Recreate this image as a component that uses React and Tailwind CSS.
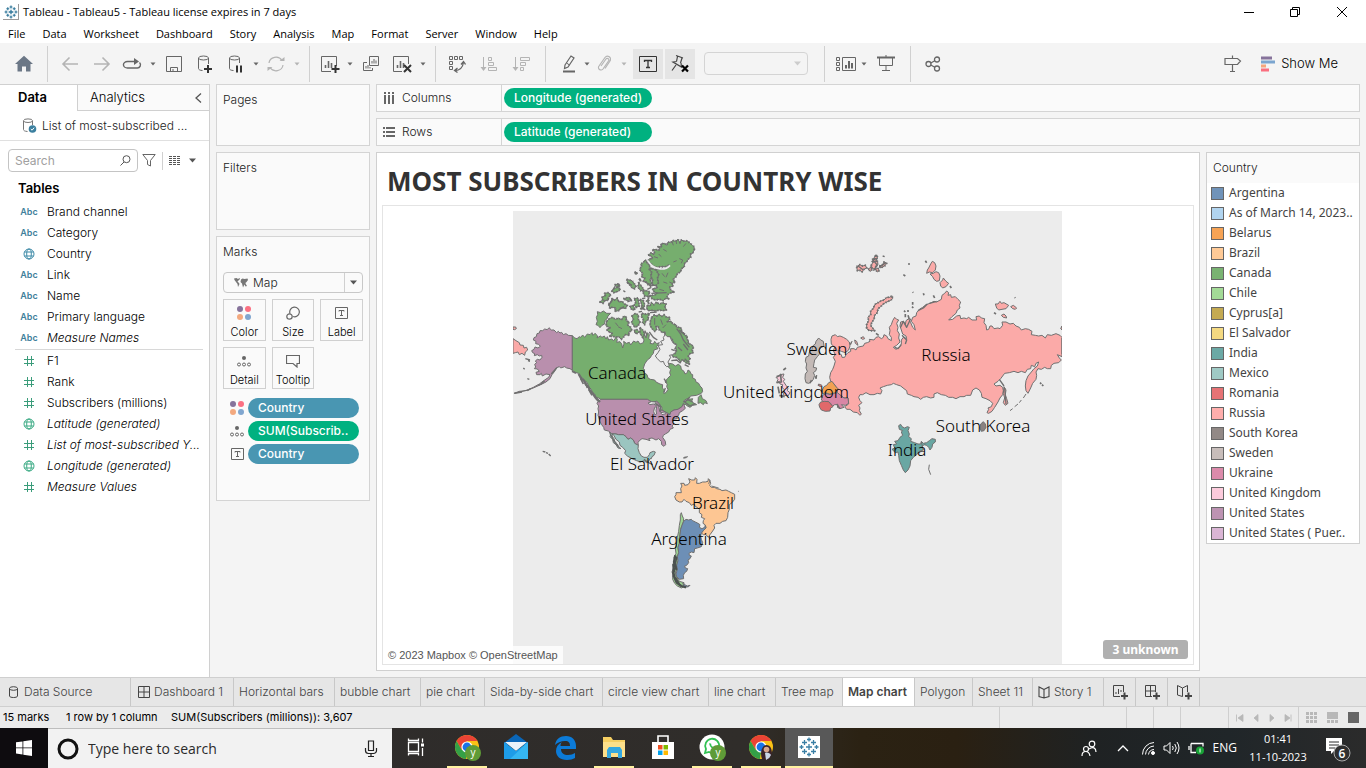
import React from "react";

const UI = "font-[Inter,'Liberation_Sans',sans-serif]";
const WIN = "font-['Open_Sans','Noto_Sans',sans-serif]";
const BOOK = "font-['Noto_Sans','Open_Sans',sans-serif]";

/* ---------- small helpers ---------- */

function Svg({ w = 20, h = 20, children, className = "", ...rest }) {
  return (
    <svg
      width={w}
      height={h}
      viewBox={`0 0 ${w} ${h}`}
      fill="none"
      stroke="currentColor"
      aria-hidden="true"
      className={`shrink-0 ${className}`}
      {...rest}
    >
      {children}
    </svg>
  );
}

function Tool({ label, w = "w-7", tone = "text-[#666]", active = false, children }) {
  return (
    <button
      type="button"
      aria-label={label}
      className={`${w} ${tone} ${active ? "bg-[#e5e5e5]" : ""} flex h-[30px] shrink-0 items-center justify-center`}
    >
      {children}
    </button>
  );
}

function Caret({ w = "w-3", tone = "text-[#666]" }) {
  return (
    <Tool label="More options" w={w} tone={tone}>
      <Svg w={6} h={4} stroke="none" fill="currentColor">
        <path d="M0.5 0.5h5L3 3.5z" />
      </Svg>
    </Tool>
  );
}

function Sep({ className = "" }) {
  return <span className={`h-9 w-px shrink-0 bg-[#d0d0d0] ${className}`} />;
}

function Bars() {
  return <path d="M5.5 14v-3M8.5 14V7M11.5 14V9" strokeWidth="1.6" />;
}

/* ---------- top bars ---------- */

function TableauMark({ size = 16 }) {
  return (
    <svg width={size} height={size} viewBox="0 0 24 24" stroke="#2f7699" fill="none" aria-hidden="true">
      <path d="M12 8v8M8 12h8" strokeWidth="2.2" />
      <path d="M12 1v5M9.5 3.5h5M12 18v5M9.5 20.5h5M1 12h5M3.5 9.5v5M18 12h5M20.5 9.5v5" strokeWidth="1.9" />
      <path d="M6.5 4v5M4 6.5h5M17.5 4v5M15 6.5h5M6.5 15v5M4 17.5h5M17.5 15v5M15 17.5h5" strokeWidth="1.9" />
    </svg>
  );
}

function TitleBar() {
  return (
    <header className={`flex h-6 items-center bg-white text-[11px] text-black ${WIN}`}>
      <span className="ml-[3px] flex h-4 w-4 items-center justify-center border-r border-b border-[#999]">
        <TableauMark size={14} />
      </span>
      <h1 className="ml-1 whitespace-nowrap">Tableau - Tableau5 - Tableau license expires in 7 days</h1>
      <div className="ml-auto flex text-black">
        <button type="button" aria-label="Minimize" className="flex h-6 w-[46px] items-center justify-center">
          <Svg w={10} h={10}><path d="M0 5.5h10" /></Svg>
        </button>
        <button type="button" aria-label="Restore" className="flex h-6 w-[46px] items-center justify-center">
          <Svg w={10} h={10}><path d="M0.5 2.5h7v7h-7zM2.5 2.5v-2h7v7h-2" /></Svg>
        </button>
        <button type="button" aria-label="Close" className="flex h-6 w-12 items-center justify-center">
          <Svg w={12} h={12}><path d="M1 1l10 10M11 1L1 11" /></Svg>
        </button>
      </div>
    </header>
  );
}

const MENUS = ["File", "Data", "Worksheet", "Dashboard", "Story", "Analysis", "Map", "Format", "Server", "Window", "Help"];

function MenuBar() {
  return (
    <nav className={`flex h-[19px] items-center gap-[17px] bg-white pl-2 text-[11px] text-black ${WIN}`}>
      {MENUS.map((m) => (
        <button key={m} type="button" className="leading-4">{m}</button>
      ))}
    </nav>
  );
}

function Toolbar() {
  const faint = "text-[#b4b4b4]";
  return (
    <div className="flex h-[41px] items-center">
      <Tool label="Home" w="w-[47px]">
        <svg width="18" height="18" viewBox="0 0 18 18" aria-hidden="true">
          <path d="M9 0.8L18 9h-2.5v7.5h-4.5v-5H7v5H2.5V9H0L9 0.8z" fill="#6b7786" />
        </svg>
      </Tool>
      <Sep className="mr-1.5" />
      <Tool label="Back" w="w-8" tone={faint}>
        <Svg w={18} h={16}><path d="M17 8H2M8.5 1.5L2 8l6.5 6.5" strokeWidth="1.6" /></Svg>
      </Tool>
      <Tool label="Forward" w="w-8" tone={faint}>
        <Svg w={18} h={16}><path d="M1 8h15M9.5 1.5L16 8l-6.5 6.5" strokeWidth="1.6" /></Svg>
      </Tool>
      <Tool label="Replay">
        <Svg w={20} h={12}>
          <path d="M14 3.5H5.5a4 3.2 0 0 0 0 6.5h9.5a3.2 3.2 0 0 0 2.5-5.5" strokeWidth="1.4" />
          <path d="M12 0l5 3.5-5 3.5z" fill="currentColor" stroke="none" />
        </Svg>
      </Tool>
      <Caret w="w-[14px]" />
      <Tool label="Save">
        <Svg w={18} h={18}><path d="M1.5 1.5h15v15h-15zM5.5 16.5v-4h7v4M8 16v-2" /></Svg>
      </Tool>
      <Tool label="New data source" w="w-[34px]">
        <Svg w={16} h={18}>
          <path d="M1.5 3v10.5c0 1 1.5 2 4 2M11.5 3v6" />
          <ellipse cx="6.5" cy="3" rx="5" ry="2" />
          <path d="M11 10v8M7 14h8" stroke="#333" strokeWidth="2" />
        </Svg>
      </Tool>
      <Tool label="Pause auto updates">
        <Svg w={16} h={18}>
          <path d="M1.5 3v10.5c0 1 1.5 2 4 2M11.5 3v5" />
          <ellipse cx="6.5" cy="3" rx="5" ry="2" />
          <path d="M9 10.5v7M13 10.5v7" stroke="#333" strokeWidth="2" />
        </Svg>
      </Tool>
      <Caret />
      <Tool label="Refresh" tone={faint}>
        <Svg w={18} h={16}>
          <path d="M2 7a7 6.5 0 0 1 13-2.500M16 9a7 6.5 0 0 1-13 2.500" strokeWidth="1.2" />
          <path d="M12.5 5h5V1zM5.5 11h-5v4z" fill="currentColor" stroke="none" />
        </Svg>
      </Tool>
      <Caret w="w-[14px]" tone={faint} />
      <Sep className="mr-1.5 ml-[5px]" />
      <Tool label="New worksheet">
        <Svg w={20} h={20}>
          <path d="M11 17.5H1.5v-15h15V12" />
          <Bars />
          <path d="M15.5 11v8M11.5 15h8" stroke="#333" strokeWidth="2" />
        </Svg>
      </Tool>
      <Caret />
      <Tool label="Duplicate" w="w-[30px]">
        <Svg w={18} h={18}>
          <path d="M7.5 1.5h9v9h-9zM5 7.500H1.5v8h9V13M10 8.500V6M12 8.500V4M14 8.500V5.500M4 13.500V11M6 13.500V10M8 13.500V12" />
        </Svg>
      </Tool>
      <Tool label="Clear sheet" w="w-8">
        <Svg w={20} h={20}>
          <path d="M10 17.5H1.5v-15h15V10" />
          <Bars />
          <path d="M12 11l7 7M19 11l-7 7" stroke="#333" strokeWidth="2" />
        </Svg>
      </Tool>
      <Caret w="w-[10px]" />
      <Sep className="mr-[5px] ml-[7px]" />
      <Tool label="Swap rows and columns" w="w-8">
        <Svg w={18} h={18}>
          <path d="M1.5 1.5h3v3h-3zM6.500 1.5h3v3h-3zM11.500 1.5h3v3h-3zM1.5 6.500h3v3h-3zM1.5 11.500h3v3h-3z" />
          <path d="M7 15.500c4 0 7.500-2 8.500-8M9.500 13l-3 2.500 3 2M13 9.500l2.500-3 2 3" strokeWidth="1.3" />
        </Svg>
      </Tool>
      <Tool label="Sort ascending" w="w-8" tone={faint}>
        <Svg w={18} h={16}>
          <path d="M3.5 1v12M8.5 1.500h3v3h-3zM8.5 6.500h5v3h-5zM8.500 11.500h8v3h-8z" />
          <path d="M0.500 11h6l-3 4z" fill="currentColor" stroke="none" />
        </Svg>
      </Tool>
      <Tool label="Sort descending" w="w-8" tone={faint}>
        <Svg w={18} h={16}>
          <path d="M3.500 1v12M8.500 1.500h9v3h-9zM8.500 6.500h5v3h-5zM8.500 11.500h3v3h-3z" />
          <path d="M0.500 11h6l-3 4z" fill="currentColor" stroke="none" />
        </Svg>
      </Tool>
      <Sep className="mr-[9px] ml-2" />
      <Tool label="Highlight">
        <Svg w={14} h={18}>
          <path d="M3 10L9 1l3 2-6 9-3.500 1.500z" strokeWidth="1.2" />
          <path d="M4.500 8l3 2" />
          <path d="M1 16.500h12" strokeWidth="2" />
        </Svg>
      </Tool>
      <Caret w="w-2" />
      <Tool label="Group members" w="w-[26px]" tone={faint}>
        <Svg w={14} h={18}>
          <path d="M4 11l5-7a1.500 1.500 0 0 1 2.500 2L6 14a2.500 2.500 0 0 1-4-3l6-8.500a3 3 0 0 1 5 3.500l-5 7.500" strokeWidth="1.2" />
        </Svg>
      </Tool>
      <Caret w="w-[14px]" tone={faint} />
      <Tool label="Show mark labels" w="ml-0.5 w-[30px]" active tone="text-[#333]">
        <Svg w={18} h={16}>
          <path d="M0.500 0.500h17v15h-17z" />
          <path d="M5.500 6V4.500h7V6M9 4.500v7M7 11.500h4" strokeWidth="1.3" />
        </Svg>
      </Tool>
      <Tool label="Fix axes" w="ml-0.5 w-[30px]" active tone="text-[#444]">
        <Svg w={20} h={20}>
          <path d="M6 1.500l7 2.500M7.500 2.500L6.500 7.500M12 4L10.500 9M6.500 7.500L3 8l8.500 5-0.500-4M6 11L2 16.500" strokeWidth="1.2" />
          <path d="M12 11.500l6 6M18 11.500l-6 6" stroke="#000" strokeWidth="2.2" />
        </Svg>
      </Tool>
      <button
        type="button"
        aria-label="Fit"
        className="ml-[9px] flex h-[23px] w-[104px] shrink-0 items-center justify-end rounded-sm border border-[#d4d4d4] pr-1.5 text-[#ccc]"
      >
        <Svg w={7} h={5} fill="currentColor" stroke="none"><path d="M0 0.500h7L3.500 4.500z" /></Svg>
      </button>
      <Sep className="mr-[7px] ml-4" />
      <Tool label="Show cards">
        <Svg w={20} h={16}>
          <path d="M0.500 1.500h3v3h-3zM0.500 6.500h3v3h-3zM0.500 11.500h3v3h-3zM6.500 1.500h13v13h-13z" />
          <path d="M10 12.500V9M13 12.500V5M16 12.500V7" strokeWidth="2" />
        </Svg>
      </Tool>
      <Caret w="w-2" />
      <Tool label="Presentation mode" w="w-9">
        <Svg w={18} h={18}>
          <path d="M0 2.500h18" strokeWidth="2" />
          <path d="M2.500 3v7.500h13V3M9 0v2M9 10.500V15" />
          <path d="M5 15.500h8" />
        </Svg>
      </Tool>
      <Sep className="mr-2 ml-1.5" />
      <Tool label="Share">
        <Svg w={16} h={16} strokeWidth="1.3">
          <circle cx="3.500" cy="8" r="2.500" />
          <circle cx="12" cy="3.500" r="2.500" />
          <circle cx="12" cy="12.500" r="2.500" />
          <path d="M5.800 7l4-2.300M5.800 9l4 2.300" />
        </Svg>
      </Tool>
      <Tool label="Guide" w="ml-auto w-8">
        <Svg w={20} h={20}>
          <path d="M2 4.500h12.500l3 2.500-3 3.500H2zM9.500 1.500v3M9.500 10.500v7M7 17.500h5" strokeWidth="1.2" />
        </Svg>
      </Tool>
      <button type="button" className={`mr-7 ml-3 flex items-center gap-[6px] text-[13px] font-light text-black ${UI}`}>
        <Svg w={14} h={16} stroke="none">
          <path d="M0 0.500h11v3H0z" fill="#86739b" />
          <path d="M0 4.500h14v3H0z" fill="#7ba5cf" />
          <path d="M0 8.500h5v3H0z" fill="#f5a57d" />
          <path d="M0 12.500h8v3H0z" fill="#fb6e7f" />
        </Svg>
        Show Me
      </button>
    </div>
  );
}

/* ---------- data pane ---------- */

function Hash() {
  return <Svg w={12} h={12} stroke="#3a9c7a"><path d="M4.500 1v10M8.500 1v10M1 4.500h10M1 8.500h10" /></Svg>;
}

function Globe({ color }) {
  return (
    <Svg w={12} h={12} stroke={color}>
      <circle cx="6" cy="6" r="5" />
      <ellipse cx="6" cy="6" rx="2.300" ry="5" />
      <path d="M1.500 4h9M1.500 8h9" />
    </Svg>
  );
}

function FieldIcon({ kind }) {
  if (kind === "abc") return <span className="text-[9px] font-semibold text-[#3f7f9c]">Abc</span>;
  if (kind === "geo") return <Globe color="#3f8ba8" />;
  if (kind === "geoM") return <Globe color="#3cab85" />;
  return <Hash />;
}

const DIMENSIONS = [
  ["abc", "Brand channel"],
  ["abc", "Category"],
  ["geo", "Country"],
  ["abc", "Link"],
  ["abc", "Name"],
  ["abc", "Primary language"],
  ["abc", "Measure Names", true],
];
const MEASURES = [
  ["num", "F1"],
  ["num", "Rank"],
  ["num", "Subscribers (millions)"],
  ["geoM", "Latitude (generated)", true],
  ["num", "List of most-subscribed Y...", true],
  ["geoM", "Longitude (generated)", true],
  ["num", "Measure Values", true],
];

function FieldList({ items }) {
  return (
    <ul>
      {items.map(([kind, name, italic]) => (
        <li key={name} className="flex h-[21px] items-center">
          <span className="flex w-[18px] shrink-0 items-center justify-center">
            <FieldIcon kind={kind} />
          </span>
          <span className={`ml-[9px] font-light whitespace-nowrap ${italic ? "italic" : ""}`}>{name}</span>
        </li>
      ))}
    </ul>
  );
}

function DataPane() {
  return (
    <aside className={`flex w-[210px] shrink-0 flex-col border-t border-r border-[#d0d0d0] bg-white text-[12px] text-black ${UI}`}>
      <div className="flex h-[26px]">
        <button type="button" className="w-[77px] pr-3 text-[13px] font-semibold text-black">Data</button>
        <button type="button" className="flex flex-1 items-center justify-between border-b border-l border-[#d0d0d0] bg-[#fafafa] pr-[7px] pl-3 text-[13px] font-light text-black">
          Analytics
          <Svg w={7} h={10} className="text-[#555]"><path d="M6 0.500L1 5l5 4.500" strokeWidth="1.3" /></Svg>
        </button>
      </div>
      <div className="flex h-[30px] items-center border-b border-[#e0e0e0] pl-[22px] font-light text-[#222]">
        <Svg w={15} h={15} className="text-[#777]">
          <path d="M1.500 3v8.500c0 1 1.200 1.800 4 2M10.500 3v4" />
          <ellipse cx="6" cy="2.700" rx="4.500" ry="1.800" />
          <circle cx="10.500" cy="11" r="3.800" fill="#3b7f9f" stroke="none" />
          <path d="M8.800 11l1.300 1.200 2-2.500" stroke="#fff" />
        </Svg>
        <span className="ml-[5px] whitespace-nowrap">List of most-subscribed ...</span>
      </div>
      <div className="mt-2 flex h-[23px] items-center pl-2">
        <label className="flex h-[23px] w-[130px] items-center rounded-sm border border-[#c4c4c4] pr-[6px] pl-1.5">
          <input type="text" placeholder="Search" aria-label="Search fields" className="w-full min-w-0 outline-none placeholder:text-[#a0a0a0]" />
          <Svg w={11} h={11} className="text-[#555]">
            <circle cx="6.500" cy="4.200" r="3.500" /><path d="M4 7L0.500 10.500" />
          </Svg>
        </label>
        <button type="button" aria-label="Filter" className="ml-1 text-[#666]">
          <Svg w={14} h={13}><path d="M0.800 0.500h12.400L8.500 6.500v5.500l-3-1.500v-4z" /></Svg>
        </button>
        <span className="ml-1.5 h-[18px] w-px bg-[#d0d0d0]" />
        <button type="button" aria-label="View options" className="ml-1.5 flex items-center gap-2 text-[#555]">
          <Svg w={12} h={10}>
            <path d="M0 0.500h12M0 2.500h12M0 4.500h12M0 6.500h12M0 8.500h12" strokeDasharray="3 1" />
          </Svg>
          <Svg w={7} h={5} fill="currentColor" stroke="none"><path d="M0 0.500h7L3.500 4.500z" /></Svg>
        </button>
      </div>
      <h2 className="mt-[7px] pl-[18px] text-[13px] leading-[18px] font-semibold text-black">Tables</h2>
      <div className="mt-1 mr-1.5 ml-[15px]">
        <div className="pl-[5px]"><FieldList items={DIMENSIONS} /></div>
        <hr className="mt-px border-[#d8d8d8]" />
        <div className="pl-[5px]"><FieldList items={MEASURES} /></div>
      </div>
    </aside>
  );
}

/* ---------- cards ---------- */

function ColorDots() {
  return (
    <Svg w={14} h={14} stroke="none">
      <circle cx="3" cy="3" r="3" fill="#86739b" /><circle cx="11" cy="3" r="3" fill="#fb7082" />
      <circle cx="3" cy="11" r="3" fill="#f3a97f" /><circle cx="11" cy="11" r="3" fill="#80a6cf" />
    </Svg>
  );
}
function DetailDots() {
  return (
    <Svg w={14} h={11} className="text-[#666]">
      <circle cx="7" cy="2" r="2" fill="currentColor" stroke="none" />
      <circle cx="2" cy="8.500" r="1.500" /><circle cx="7" cy="8.500" r="1.500" /><circle cx="12" cy="8.500" r="1.500" />
    </Svg>
  );
}
function TextIcon() {
  return (
    <Svg w={13} h={12} className="text-[#666]">
      <path d="M0.500 0.500h12v11h-12zM4 4.500v-1h5v1M6.500 3.500v5M5 8.500h3" />
    </Svg>
  );
}

const SHELF = "border border-[#d4d4d4] bg-[#fafafa]";

function MarkButton({ label, children }) {
  return (
    <button type="button" className="flex h-[42px] flex-col items-center justify-between border border-[#d0d0d0] bg-[#fafafa] pt-[5px] text-[11px] leading-4 font-light text-black">
      <span className="flex h-4 items-center">{children}</span>
      {label}
    </button>
  );
}

function Pill({ icon, color, children }) {
  return (
    <li className="flex items-center">
      <span className="flex w-[18px] justify-center">{icon}</span>
      <button type="button" className={`${color} ml-0.5 h-5 w-[111px] rounded-full pl-[10px] text-left font-medium whitespace-nowrap text-white`}>
        {children}
      </button>
    </li>
  );
}

function Cards() {
  return (
    <div className={`flex w-[154px] shrink-0 flex-col gap-1.5 text-[12px] text-[#222] ${UI}`}>
      <section className={`h-[62px] px-1.5 pt-1.5 ${SHELF}`}><h2 className="leading-[18px] font-light">Pages</h2></section>
      <section className={`h-[78px] px-1.5 pt-1.5 ${SHELF}`}><h2 className="leading-[18px] font-light">Filters</h2></section>
      <section className={`min-h-[264px] px-1.5 pt-1.5 pb-9 ${SHELF}`}>
        <h2 className="leading-[18px] font-light">Marks</h2>
        <button type="button" className="mt-[11px] flex h-[21px] w-full items-center rounded-sm border border-[#c8c8c8] font-light text-[#222]">
          <Svg w={14} h={10} stroke="none" fill="#777" className="ml-[10px]">
            <path d="M0 0.500l2.500-0.500 1.500 1 1.500-1 0.500 1-1.500 1.500-1 1 1.500 1.500 0.500 1-1.500 3-0.500-3L2 4 0.500 2zM7 1.500L8.500 0.500l2 0.500 3-0.500 0.500 1.500-1.500 2 0.500 0.500-1-0.500-0.500 1.500 1.500 2.500-1.500 0.500-1-2-1.500 3L8 5.500 6.500 4z" />
          </Svg>
          <span className="ml-[5px]">Map</span>
          <span className="ml-auto flex h-full w-[18px] items-center justify-center border-l border-[#d0d0d0] text-[#555]">
            <Svg w={7} h={5} fill="currentColor" stroke="none"><path d="M0 0.500h7L3.500 4.500z" /></Svg>
          </span>
        </button>
        <div className="mt-1.5 grid grid-cols-3 gap-1.5">
          <MarkButton label="Color"><ColorDots /></MarkButton>
          <MarkButton label="Size">
            <Svg w={14} h={14} className="text-[#666]">
              <path d="M4 7.500A4.800 4.800 0 1 1 7 10.500" strokeWidth="1.2" /><circle cx="3.500" cy="10.500" r="2.700" strokeWidth="1.2" />
            </Svg>
          </MarkButton>
          <MarkButton label="Label"><TextIcon /></MarkButton>
          <MarkButton label="Detail"><DetailDots /></MarkButton>
          <MarkButton label="Tooltip">
            <Svg w={14} h={14} className="text-[#666]"><path d="M0.500 1.500h13v8h-2.500v3.500L7 9.500H0.500z" strokeWidth="1.2" /></Svg>
          </MarkButton>
        </div>
        <ul className="mt-[9px] ml-[5px] space-y-[3px]">
          <Pill icon={<ColorDots />} color="bg-[#4996b2]">Country</Pill>
          <Pill icon={<DetailDots />} color="bg-[#00b180]">SUM(Subscrib..</Pill>
          <Pill icon={<TextIcon />} color="bg-[#4996b2]">Country</Pill>
        </ul>
      </section>
    </div>
  );
}

function Shelf({ name, icon, pill }) {
  return (
    <div className={`flex h-7 items-center ${SHELF}`}>
      <div className="flex h-full w-[125px] shrink-0 items-center gap-[7px] border-r border-[#d4d4d4] pl-1.5 font-light text-[#222]">
        {icon}
        {name}
      </div>
      <button type="button" className="ml-0.5 h-5 w-[148px] rounded-full bg-[#00b180] pl-[10px] text-left font-medium whitespace-nowrap text-white">
        {pill}
      </button>
    </div>
  );
}

/* ---------- map ---------- */

const C = {
  canada: "#76ae6e",
  us: "#b98fad",
  mexico: "#9bc5c0",
  brazil: "#fdc693",
  chile: "#9ed593",
  argentina: "#6d8fb6",
  russia: "#fbaaa8",
  sweden: "#c3b9b6",
  belarus: "#f2a152",
  ukraine: "#d886a5",
  romania: "#e1686a",
  uk: "#f8c8d8",
  india: "#69a7a3",
  korea: "#8a8280",
  land: "#ececec",
};

/* Outlines are in thirds of a pixel inside each region's own group.
   A third entry marks coasts broken up by fjords. */
const NORTH_AMERICA = [
  ["us", "M187,317 L175,316 168,311 160,314 155,307 150,309 145,304 140,308 132,300 124,300 117,293 112,299 104,297 98,302 90,302 88,309 81,311 79,320 72,323 70,330 78,334 77,341 86,343 91,349 84,354 75,351 72,358 65,362 68,368 74,371 73,377 82,374 88,378 95,376 96,382 90,390 82,388 76,393 80,398 74,403 77,411 73,416 82,417 88,424 78,427 80,434 90,434 94,430 97,438 108,432 120,434 116,442 104,450 88,462 70,472 52,480 30,486 12,490 28,484 48,482 70,474 92,464 108,456 120,446 126,434 134,424 138,414 148,410 152,414 164,410 170,414 180,416 187,421Z"],
  ["canada", "M187,317 L194,324 201,326 208,320 212,322 218,315 224,322 232,312 240,314 246,308 249,316 255,310 263,318 261,324 271,318 276,322 283,318 288,327 292,320 296,330 305,327 311,332 318,322 322,328 320,337 330,335 335,342 338,354 342,342 341,334 349,340 358,337 362,345 371,333 378,337 384,333 390,342 400,338 402,330 398,320 404,314 408,324 412,308 418,314 416,326 424,332 420,340 430,342 434,334 440,341 448,338 440,350 444,356 432,360 430,370 425,376 420,384 412,390 404,402 400,415 404,420 402,428 411,434 414,444 421,448 434,450 438,456 450,462 458,464 457,474 463,480 461,490 468,488 474,478 470,470 472,462 465,456 472,446 482,436 479,428 482,418 474,410 478,400 488,402 496,408 505,403 512,408 514,418 522,424 525,432 532,428 534,420 540,424 543,432 548,434 548,444 556,448 558,456 566,460 570,468 576,474 578,484 574,490 560,496 542,498 536,504 524,510 520,516 530,512 538,508 548,506 545,514 552,520 560,524 548,526 540,532 532,528 525,522 516,530 504,538 492,540 482,546 480,554 466,546 456,540 450,545 453,530 447,520 440,514 425,516 412,508 L272,508 266,504 258,502 254,492 247,488 244,478 236,470 232,458 224,452 218,444 210,440 206,430 198,428 187,421Z"],
  ["canada", "M565,502 L573,494 577,506 588,512 592,521 584,518 580,524 572,518 564,520Z"],
  ["canada", "M425,262 L432,255 440,258 446,253 456,259 462,254 470,262 480,262 478,270 472,275 484,274 488,282 498,284 500,292 511,292 516,300 512,306 522,308 524,316 532,318 530,328 536,332 534,340 545,344 551,352 546,358 550,368 540,371 535,378 540,386 536,392 538,402 526,398 518,388 512,396 505,386 498,382 488,380 486,374 496,370 500,360 494,350 500,344 490,338 486,326 478,320 470,324 464,316 466,306 458,308 448,300 444,288 438,290 440,300 434,304 426,296 420,286 421,274Z", true],
  ["canada", "M553,58 L548,70 542,72 542,82 534,88 530,96 524,100 522,112 514,116 512,126 502,130 500,138 488,150 496,156 486,160 490,168 478,172 484,182 494,186 478,190 470,198 476,206 466,206 460,212 448,208 436,210 426,206 420,196 432,196 442,190 430,184 428,176 442,174 438,166 426,166 430,156 440,152 430,146 434,136 446,138 442,128 436,118 448,118 458,116 468,116 476,106 466,110 452,110 440,112 430,108 422,100 414,94 418,86 428,86 424,78 414,76 424,68 432,74 434,64 426,60 438,58 446,62 450,54 442,50 456,50 452,42 464,40 470,46 474,36 482,38 488,31 496,34 504,28 510,38 514,30 524,34 532,32 540,40 546,44 552,50Z", true],
  ["canada", "M405,90 L411,94 410,100 420,104 418,112 426,116 424,124 431,130 424,136 427,146 419,148 425,158 422,168 414,164 408,156 400,154 404,144 394,140 399,130 391,124 390,114 396,110 392,102 400,98Z", true],
  ["canada", "M418,118 L430,116 440,122 446,134 442,146 446,158 436,168 426,162 428,148 422,138 426,128Z", true],
  ["canada", "M412,226 L420,228 424,218 432,224 440,216 448,223 456,218 468,222 465,230 469,240 458,242 448,240 438,243 426,241 414,242 410,234Z", true],
  ["canada", "M262,245 L272,248 280,243 290,250 302,250 294,258 291,266 285,272 284,282 276,286 270,293 264,286 258,284 262,274 259,262 263,254Z"],
  ["canada", "M290,274 L298,266 308,262 316,268 326,264 334,270 342,258 350,262 348,272 358,276 352,284 362,292 366,302 356,306 358,316 346,314 340,322 334,328 326,320 316,322 308,318 298,320 306,310 294,304 290,298 302,294 288,288Z", true],
  ["canada", "M366,258 L376,250 386,256 384,266 390,276 384,288 374,292 370,284 364,278 370,268Z", true],
  ["canada", "M396,250 L408,253 419,250 414,260 416,268 407,274 404,284 398,278 400,266 394,260Z", true],
  ["canada", "M296,222 L304,214 306,206 314,210 322,204 326,216 336,214 344,222 352,226 346,236 334,232 326,242 314,244 318,234 306,232 300,236Z", true],
  ["canada", "M270,216 L278,210 276,202 286,196 284,190 296,188 303,196 294,202 296,210 284,212 280,220Z", true],
  ["canada", "M350,148 L358,150 366,152 372,160 378,168 374,176 366,174 360,166 354,160Z M386,158 L394,168 402,180 392,182 384,172Z M398,184 L410,182 420,186 416,194 420,200 404,198Z M372,206 L384,204 386,216 388,228 380,232 372,226 378,216Z M390,208 L400,212 404,224 400,236 392,238 396,226Z M306,184 L312,176 322,172 332,178 324,184 312,188Z M314,164 L328,162 328,172 320,170Z M340,206 L356,202 364,208 352,212Z M360,230 L368,226 376,238 366,240Z M374,126 L382,128 378,134Z M388,146 L394,150 390,154Z M416,204 L410,214 416,220Z M372,302 L380,298 388,306 378,312Z M390,292 L400,302 404,312 398,322 390,310Z", true],
  ["us", "M272,508 L412,508 425,516 440,514 447,520 453,530 450,545 456,540 466,546 480,554 482,546 492,540 504,538 516,530 520,520 526,535 518,542 508,548 506,556 500,560 502,566 490,568 488,578 492,582 486,588 490,594 480,598 476,606 466,612 460,616 458,622 466,634 467,644 462,649 455,644 454,634 446,626 438,630 426,624 416,626 420,632 408,628 396,626 388,632 384,638 385,646 374,640 370,630 362,624 354,628 348,620 340,614 325,614 318,612 305,611 295,603 283,600 281,592 275,584 270,576 267,564 264,556 266,546 264,536 266,528 261,520 264,514 258,508 268,512Z"],
  ["mexico", "M298,606 L305,611 318,612 325,614 340,614 348,620 354,628 362,624 370,630 374,640 385,646 384,656 388,668 394,678 402,682 412,682 418,674 420,668 430,664 436,666 432,676 426,680 424,686 420,686 416,694 410,698 402,692 392,696 380,692 366,686 352,678 344,670 347,662 338,652 330,646 328,636 318,628 312,617 308,612 306,618 312,626 314,634 322,642 326,650 333,656 324,654 318,644 310,638 308,628 300,620 302,614Z"],
  ["russia", "M9,326 L18,332 28,338 30,345 40,346 42,354 50,352 53,360 46,366 44,376 36,370 28,374 24,366 16,368 9,370Z"],
  ["russia", "M9,291 L17,291 19,296 14,299 9,298Z"],
  ["land", "M414,519 L424,515 436,516 444,524 438,526 430,522 420,524Z M434,532 L440,530 438,542 440,552 434,554 431,544Z M446,528 L456,532 455,540 449,544Z M452,548 L464,546 468,551 456,554Z"],
  ["land", "M460,322 L466,314 472,320 480,320 484,330 490,340 500,346 494,356 498,366 488,374 478,376 482,382 474,396 478,408 470,410 464,404 460,394 452,396 442,386 436,378 444,368 450,358 444,346 458,344 452,334 462,330Z"],
];

const SOUTH_AMERICA = [
  ["brazil", "M155,120 L164,120 166,113 171,118 170,130 178,130 188,126 196,126 204,124 205,116 209,120 212,130 209,136 214,142 224,142 230,146 240,148 246,152 258,150 266,154 274,158 284,163 284,178 276,188 268,194 268,208 264,218 263,232 258,242 248,244 240,250 228,250 222,256 224,264 216,276 210,284 205,292 198,284 190,284 183,278 190,270 198,262 195,254 189,250 190,242 194,236 184,232 186,224 178,218 178,208 172,202 166,200 162,192 154,196 148,188 138,184 132,178 126,186 118,186 108,180 104,170 108,164 108,158 124,158 122,146 126,138 122,130 132,130 134,136 144,134 150,126 146,116Z"],
  ["chile", "M124,218 L127,228 131,236 130,246 126,256 122,268 120,284 118,296 118,310 114,322 116,338 112,350 114,362 110,376 112,388 106,396 108,408 118,424 132,428 132,440 124,444 112,438 104,430 98,418 99,404 96,396 100,384 98,374 104,362 102,352 108,340 106,326 110,310 112,292 116,274 118,256 121,240 121,224Z"],
  ["argentina", "M131,244 L138,238 146,240 154,238 158,242 166,246 174,250 180,254 178,262 186,266 194,262 196,256 198,264 190,272 184,280 182,288 184,298 188,308 184,320 172,324 164,326 162,338 154,336 147,340 148,346 154,348 150,356 144,360 146,368 140,376 134,378 136,384 143,386 140,394 134,398 130,406 131,416 118,418 110,410 108,402 112,388 110,376 114,362 112,350 116,338 114,322 118,310 118,296 120,284 122,268 126,256Z"],
  ["argentina", "M128,430 L134,434 142,438 150,436 146,440 134,442Z"],
];

const EURASIA = [
  ["russia", "M243,298 L246,288 256,284 262,290 270,288 280,292 290,298 298,306 300,318 296,330 286,338 274,334 264,330 266,340 274,344 276,352 284,352 288,344 294,338 302,334 302,326 312,326 318,330 322,322 330,320 340,318 344,310 352,308 360,304 358,298 372,300 378,292 386,290 394,296 400,292 402,284 410,288 414,296 424,302 424,292 418,284 420,272 418,262 424,254 428,242 434,232 440,238 446,240 440,250 444,262 442,272 448,282 446,294 450,306 440,316 430,322 438,328 448,322 454,312 454,300 460,292 470,296 468,288 458,282 454,270 450,258 452,246 460,244 466,254 468,242 476,236 482,248 488,262 496,270 492,254 484,244 488,232 498,228 500,218 508,208 518,202 528,194 540,190 552,184 560,186 574,178 576,166 584,160 590,153 596,158 594,166 602,164 604,172 616,170 624,178 632,186 628,196 630,204 622,210 618,220 606,230 596,240 608,238 620,228 630,226 632,236 642,234 650,236 656,232 666,240 680,240 678,230 688,228 694,234 704,236 702,248 708,256 710,270 716,268 720,258 726,258 732,266 744,264 750,266 758,256 756,246 768,246 780,252 790,250 798,258 808,262 814,270 826,266 836,268 846,274 844,284 856,286 866,288 876,286 886,294 892,284 904,286 918,281 930,286 936,292 936,350 922,344 928,354 934,360 926,368 912,370 904,376 902,386 892,386 884,382 874,388 864,386 858,396 860,406 858,418 848,430 842,444 834,460 828,452 826,438 828,422 834,408 844,396 852,386 862,378 866,366 858,370 854,380 844,376 842,386 832,388 826,398 814,394 804,398 792,394 778,398 764,400 752,416 744,424 732,432 738,438 750,436 758,442 760,452 758,464 750,474 744,486 734,502 726,514 716,520 711,518 716,508 714,504 724,500 728,490 720,482 708,476 696,472 694,460 688,450 678,444 668,450 662,466 650,466 642,470 630,470 618,476 608,472 596,472 586,466 574,464 562,458 552,462 552,472 542,474 530,470 520,472 512,478 504,472 492,470 484,466 472,462 470,452 462,446 452,438 440,434 430,430 424,434 412,436 400,440 390,444 396,452 392,462 382,460 372,464 360,464 348,458 338,464 330,464 326,472 330,482 336,488 326,496 330,504 328,512 334,522 330,526 322,518 310,516 300,508 290,508 284,500 296,492 294,474 282,474 270,466 262,458 262,446 252,432 242,424 239,412 242,398 248,388 252,378 256,364 250,352 256,344 250,332 254,322 244,312Z"],
  ["russia", "M350,264 L350,252 356,242 354,232 362,224 362,212 370,206 374,194 384,188 394,182 402,180 410,172 420,172 426,167 428,176 420,182 410,186 400,192 392,200 384,206 382,218 374,226 372,238 366,246 362,256 368,264 374,272 364,272 354,270Z", true],
  ["russia", "M536,84 L542,72 547,64 554,68 558,78 556,90 548,98 538,96 530,100 532,90Z M540,102 L550,100 558,95 566,98 570,108 568,122 560,124 552,118 548,110Z M570,128 L578,120 580,114 588,124 596,130 588,140 578,144 572,138Z M736,192 L744,192 750,184 754,190 762,188 776,196 768,206 756,208 746,210 740,204Z M782,200 L790,196 800,204 796,208 788,206Z M754,226 L762,222 768,228 770,234 760,232Z"],
  ["russia", "M762,440 L768,450 766,464 770,476 774,490 766,496 760,488 764,474 760,460Z M300,312 l6,-8 -4,10z M332,294 l8,-4 4,6 -6,2z M314,300 l6,4 4,12 -8,-6z"],
  ["russia", "M320,80 l10,-6 8,4 8,-2 4,8 -8,4 -6,8 -8,-6 -6,2z M354,88 l8,-6 4,6 -4,6z M364,76 l6,-12 4,-10 6,4 4,12 -6,8 -4,10 -8,-4z M376,88 l8,-4 4,8 -6,4z M388,78 l10,-4 4,-8 8,4 -6,8 -12,6z M366,66 l6,-12 6,-10 4,8 -4,12z", true],
  ["russia", "M936,258 l-4,8 4,4z"],
  ["sweden", "M198,304 L206,294 212,300 220,304 222,318 212,324 206,332 210,340 202,350 194,360 192,370 190,382 200,384 198,392 190,398 194,406 190,418 184,426 176,430 168,428 165,416 166,402 172,394 168,384 170,372 166,364 168,352 176,348 178,336 186,328 188,318 196,312Z"],
  ["sweden", "M196,410 l4,-4 -2,10z"],
  ["ukraine", "M218,466 L228,460 240,464 254,460 262,458 272,466 282,474 294,474 296,490 286,496 274,494 282,502 270,506 262,502 264,494 254,494 246,500 242,490 234,484 222,486 214,480Z"],
  ["romania", "M207,494 L212,486 224,484 236,485 242,492 249,500 242,504 240,513 226,514 214,510 209,502Z"],
  ["belarus", "M217,450 L222,440 230,436 236,428 246,424 252,432 258,440 264,446 260,456 250,460 238,462 226,458 218,462Z"],
  ["romania", "M206,432 l10,4 -4,4 -8,-4z"],
  ["uk", "M84,410 L90,404 102,402 98,412 104,418 100,424 108,436 114,444 112,452 120,458 114,468 104,466 96,472 102,462 98,456 104,450 96,442 98,434 90,432 88,424 80,428 84,418 78,412Z"],
  ["india", "M446,557 L452,553 456,560 464,564 472,560 478,562 474,572 478,582 476,590 484,596 482,604 494,608 504,612 512,612 514,604 520,610 530,608 538,602 546,596 556,598 556,606 548,612 546,622 540,630 536,622 530,616 522,614 516,620 520,630 508,634 500,644 490,652 482,662 480,678 474,690 466,698 460,690 454,676 448,662 446,646 444,636 436,638 426,628 434,624 430,614 440,612 434,604 444,602 450,592 458,586 454,576 458,572 448,568Z"],
  ["korea", "M692,552 L700,545 706,552 708,562 702,572 694,574 690,564Z"],
  ["uk", "M936,294 V342"],
];

function Region({ x, y, shapes, children }) {
  return (
    <g transform={`translate(${x - 513} ${y - 211}) scale(0.33333)`} stroke="#6f6f6f" strokeWidth="3" strokeLinejoin="round">
      {shapes.map(([key, d, fjords]) => (
        <g key={d} fill={C[key]}>
          <path d={d} />
          {fjords && <path d={d} fill="none" strokeWidth="6" strokeDasharray="3 6" />}
        </g>
      ))}
      {children}
    </g>
  );
}

const LABELS = [
  ["Canada", 617, 373],
  ["United States", 637, 419],
  ["El Salvador", 652, 464],
  ["Brazil", 713, 503],
  ["Argentina", 689, 539],
  ["Sweden", 817, 349],
  ["United Kingdom", 786, 392],
  ["Russia", 946, 355],
  ["South Korea", 983, 426],
  ["India", 907, 450],
];

function WorldMap() {
  return (
    <svg width="549" height="453" viewBox="0 0 549 453" role="img" aria-label="Subscribers by country" className="mt-[5px] mr-px bg-[#ececec]">
      <Region x={510} y={230} shapes={NORTH_AMERICA}>
        <g fill="none">
          <path d="M206,432 L214,446 222,452 228,464 236,472 240,482 248,490 256,502 270,516" strokeWidth="7" />
          <path d="M212,446 L220,462 M226,456 L232,474 M236,478 L246,496 M140,414 L124,432 M186,424 L198,430" strokeWidth="5" />
          <path d="M104,452 L94,462 84,466 M62,476 L52,482 M36,486 L14,490 M40,414 l4,4 M52,446 l6,2 M46,386 l14,4 M54,392 l6,2" strokeWidth="4" />
          <path d="M98,664 l8,2 M108,668 l6,2 M116,672 l6,6 M300,610 L310,630 326,652 M402,688 L412,696 428,704 M520,684 l10,-2" strokeWidth="4" />
          <path d="M434,520 L452,530 450,544 M540,502 L524,516 540,528 556,520 M532,508 L548,516 M484,392 L500,390 512,400 M524,404 L536,410 M462,446 L470,458 M466,474 L462,486" strokeWidth="4" />
          <path d="M304,186 L316,168 M310,206 L296,226 M322,160 L326,168 M340,182 L346,186 M352,216 L362,212 M326,240 L342,230 M350,156 L366,166 M412,178 L424,172 M396,232 L406,240 M424,190 L470,188 M404,156 L422,164 M396,206 L406,204 M366,214 L360,206 M404,302 L412,316 M386,246 L396,244 M420,248 L440,246 M418,306 L430,322 442,330 M504,352 L516,362 M484,358 L494,362" strokeWidth="4" />
          <path d="M500,296 L512,312 520,330 538,352 M508,300 L524,314 M520,342 L534,360 M524,386 L534,396" strokeWidth="4" />
          <path d="M486,34 l4,12 M498,32 l2,10 M528,40 l-8,10 M508,86 l10,4 -4,10 M490,96 l10,-4 M460,58 l10,6 M432,80 l12,4 M446,72 l8,8 M456,130 l8,10 M474,128 l-6,14 M460,156 l12,4 M448,178 l14,4 M478,156 l8,4 M434,264 v20 M452,268 l6,16 M468,284 l-10,10 M324,290 l12,6 M316,278 l8,10" strokeWidth="3" />
          <path d="M414,92 Q424,112 446,116 T480,106" stroke="#ececec" strokeWidth="5" />
        </g>
      </Region>
      <Region x={640} y={440} shapes={SOUTH_AMERICA}>
        <g fill="none" stroke="#4b514f">
          <path d="M106,346 L102,366 106,382 100,398 104,414 110,428 124,438 138,442" strokeWidth="7" />
          <path d="M110,350 L106,372 110,390 M100,372 L100,412 M106,412 L118,432" strokeWidth="5" />
          <path d="M132,52 l12,-2 M210,120 l-4,12 M214,138 l22,6 M294,154 h2" stroke="#777" strokeWidth="3" />
        </g>
      </Region>
      <Region x={750} y={240} shapes={EURASIA}>
        <g fill="none">
          <path d="M452,262 L460,244 470,262 482,236 M456,286 L470,300 466,312 M504,212 L520,204 532,192 M538,190 L560,184 M434,322 L444,326 454,314 M366,56 L382,76 370,92 M324,78 L340,90 M390,80 L408,68 M378,46 L384,52 M398,48 l6,2" strokeWidth="4" />
          <path d="M474,72 h6 M460,104 l6,4 M488,156 l2,2 M520,160 l2,6 M488,186 v8 M486,200 l4,4 M474,210 v6 M462,212 l4,4 M550,166 l4,8 M526,62 l4,6 M600,138 l4,6 M794,172 l2,2 M732,218 l6,4 M870,428 l4,4 M876,434 l4,4 M378,280 l8,6 M466,222 v10 M474,226 l4,12" strokeWidth="5" />
          <path d="M780,512 L788,506 M794,500 L804,492 M808,488 L814,480 M820,474 L828,462" strokeWidth="3" />
          <path d="M80,410 L92,406 94,426 80,428 M100,390 L108,384 M90,402 l4,6 M84,440 l4,20 M88,466 L104,470" strokeWidth="5" />
          <path d="M538,674 L536,688 542,704 M514,606 L518,622" strokeWidth="3" />
          <path d="M200,406 L198,416 M184,420 L180,430 M748,418 L762,438 M764,444 L768,492 M260,492 L270,506" strokeWidth="4" />
        </g>
      </Region>
      <g fontSize="17" fill="#000" textAnchor="middle" className={`font-light ${BOOK}`}>
        {LABELS.map(([name, x, y]) => (
          <text key={name} x={x - 513} y={y - 211 + 6}>{name}</text>
        ))}
      </g>
    </svg>
  );
}

function Viz() {
  return (
    <section className="flex min-w-0 flex-1 flex-col border border-[#d0d0d0] bg-white p-[5px]">
      <h2 className={`mt-[5px] mb-1.5 pl-[5px] text-[26px] leading-9 font-bold whitespace-nowrap text-[#333] ${BOOK}`}>
        MOST SUBSCRIBERS IN COUNTRY WISE
      </h2>
      <div className="relative flex flex-1 justify-center border border-[#e4e4e4]">
        <WorldMap />
        <a href="#attribution" className="absolute bottom-0 left-0 bg-white/80 px-[5px] font-['Liberation_Sans',sans-serif] text-[11px] leading-[18px] text-[#555]">
          © 2023 Mapbox © OpenStreetMap
        </a>
        <button type="button" className="absolute right-[5px] bottom-[5px] h-[19px] w-[85px] rounded-[3px] bg-[#b0b0b0] font-['Noto_Sans',sans-serif] text-[12px] leading-[19px] font-bold text-white">
          3 unknown
        </button>
      </div>
    </section>
  );
}

const LEGEND = [
  ["Argentina", "bg-[#7093b9]"],
  ["As of March 14, 2023..", "bg-[#b1d4ef]"],
  ["Belarus", "bg-[#f6a355]"],
  ["Brazil", "bg-[#ffca96]"],
  ["Canada", "bg-[#7ab372]"],
  ["Chile", "bg-[#a3da96]"],
  ["Cyprus[a]", "bg-[#c4aa52]"],
  ["El Salvador", "bg-[#f4d981]"],
  ["India", "bg-[#6ca9a5]"],
  ["Mexico", "bg-[#9fc9c4]"],
  ["Romania", "bg-[#e67375]"],
  ["Russia", "bg-[#ffaeac]"],
  ["South Korea", "bg-[#928986]"],
  ["Sweden", "bg-[#c8bdba]"],
  ["Ukraine", "bg-[#dc8bab]"],
  ["United Kingdom", "bg-[#fccbdc]"],
  ["United States", "bg-[#bd93b2]"],
  ["United States ( Puer..", "bg-[#dab5d4]"],
];

function Legend() {
  return (
    <aside className="w-[154px] shrink-0 self-start overflow-hidden border border-[#d0d0d0] bg-white">
      <h2 className={`flex h-[30px] items-center bg-[#fafafa] pl-1.5 text-[12px] font-light text-[#222] ${UI}`}>Country</h2>
      <ul className={`text-[12px] text-[#444] ${BOOK}`}>
        {LEGEND.map(([name, color]) => (
          <li key={name} className="flex h-5 items-center gap-[5px] pl-1">
            <span className={`h-[13px] w-[13px] shrink-0 border border-[#666] ${color}`} />
            <span className="whitespace-nowrap">{name}</span>
          </li>
        ))}
      </ul>
    </aside>
  );
}

/* ---------- bottom bars ---------- */

function BookIcon() {
  return <Svg w={12} h={13}><path d="M6 3.500L1 1v9.500L6 12l5-1.500V1zM6 3.500V12" strokeWidth="1.1" /></Svg>;
}

const PlusBadge = () => <path d="M12.500 8.500v7M9 12h7" strokeWidth="2" />;

function SheetTabs() {
  const tabs = [
    ["Dashboard 1", "w-[103px]", "grid"],
    ["Horizontal bars", "w-[101px]"],
    ["bubble chart", "w-[86px]"],
    ["pie chart", "w-16"],
    ["Sida-by-side chart", "w-[118px]"],
    ["circle view chart", "w-[106px]"],
    ["line chart", "w-[67px]"],
    ["Tree map", "w-[67px]"],
    ["Map chart", "w-[72px]", "active"],
    ["Polygon", "w-[58px]"],
    ["Sheet 11", "w-[60px]"],
    ["Story 1", "w-[71px]", "book"],
  ];
  const cell = "flex shrink-0 items-center border-r border-[#c8c8c8] whitespace-nowrap";
  return (
    <nav className={`flex h-[30px] border-y border-[#cfcfcf] bg-[#e6e6e6] text-[12px] text-[#444] ${UI}`}>
      <button type="button" className="flex w-[131px] shrink-0 items-center gap-1.5 border-r border-[#c8c8c8] pl-[9px] font-light">
        <Svg w={9} h={12}><path d="M0.500 2.500v7.500c0 2 8 2 8 0V2.500" /><ellipse cx="4.500" cy="2.500" rx="4" ry="1.800" /></Svg>
        Data Source
      </button>
      {tabs.map(([name, w, kind]) => (
        <button
          key={name}
          type="button"
          className={`${w} ${cell} gap-1 pl-[5px] ${kind === "active" ? "bg-white font-semibold" : "font-light"}`}
        >
          {kind === "grid" && <Svg w={14} h={12}><path d="M2.500 0.500h11v11h-11zM8 0.500v11M2.500 6h11" /></Svg>}
          {kind === "book" && <BookIcon />}
          {name}
        </button>
      ))}
      <button type="button" aria-label="New worksheet" className={`w-8 justify-center ${cell}`}>
        <Svg w={16} h={16}><path d="M8 12.500H1.500v-11h10V8M4 10V8M6.500 10V5M9 8V6" /><PlusBadge /></Svg>
      </button>
      <button type="button" aria-label="New dashboard" className={`w-8 justify-center ${cell}`}>
        <Svg w={16} h={16}><path d="M8 12.500H1.500v-11h10V8M6.500 1.500v11M1.500 7h10" /><PlusBadge /></Svg>
      </button>
      <button type="button" aria-label="New story" className={`w-8 justify-center ${cell}`}>
        <Svg w={16} h={16}><path d="M6.500 4L1.500 1.500v9.500l5 1.500V4l5-2.500V8" /><PlusBadge /></Svg>
      </button>
    </nav>
  );
}

function StatusBar() {
  return (
    <footer className={`flex h-[21px] items-center bg-[#ebebeb] pl-[3px] text-[11px] text-black ${UI}`}>
      <span className="w-[63px]">15 marks</span>
      <span className="w-[105px] whitespace-nowrap">1 row by 1 column</span>
      <span className="whitespace-nowrap">SUM(Subscribers (millions)): 3,607</span>
      <div className="ml-auto flex h-full shrink-0 items-center">
        <span className="h-full w-[127px] border-l border-[#cfcfcf]" />
        <span className="h-full w-[27px] border-l border-[#cfcfcf]" />
        <span className="h-full w-[27px] border-l border-[#cfcfcf]" />
        <span className="h-full w-12 border-l border-[#cfcfcf]" />
        <span className="flex h-full w-[70px] items-center justify-center gap-2 border-l border-[#cfcfcf] text-[#b8b8b8]">
          {[
            ["First", "M0.500 0.500v7M7 0.500v7L2 4z"],
            ["Previous", "M6 0.500v7L2 4z"],
            ["Next", "M2 0.500v7L6 4z"],
            ["Last", "M7 0.500v7M1 0.500v7L6 4z"],
          ].map(([name, d]) => (
            <button key={name} type="button" aria-label={name}>
              <Svg w={8} h={8} fill="currentColor"><path d={d} strokeWidth="0.8" /></Svg>
            </button>
          ))}
        </span>
        <span className="flex h-full w-[68px] items-center justify-center gap-[10px] border-l border-[#cfcfcf]">
          <button type="button" aria-label="Sheet sorter">
            <Svg w={11} h={11} stroke="none" fill="#b8b8b8">
              <path d="M0 0h3v3H0zM4 0h3v3H4zM8 0h3v3H8zM0 4h3v3H0zM4 4h3v3H4zM8 4h3v3H8zM0 8h3v3H0zM4 8h3v3H4zM8 8h3v3H8z" />
            </Svg>
          </button>
          <button type="button" aria-label="Filmstrip">
            <Svg w={11} h={11} stroke="none" fill="#b8b8b8"><path d="M0 0h11v7H0zM0 8h3v3H0zM4 8h3v3H4zM8 8h3v3H8z" /></Svg>
          </button>
          <button type="button" aria-label="Tabs" className="h-[11px] w-[11px] bg-[#666]" />
        </span>
      </div>
    </footer>
  );
}

function Chrome() {
  return (
    <>
      <circle cx="12" cy="12" r="12" fill="#fbc116" />
      <path d="M1.600 6A12 12 0 0 1 22.400 6H12L6.800 15z" fill="#ea4335" />
      <path d="M1.600 6L6.800 15h5.200l-1 9A12 12 0 0 1 1.600 6z" fill="#34a047" />
      <path d="M6.800 15L12 18l-2.500 6L4 19z" fill="#34a047" />
      <circle cx="12" cy="12" r="5.600" fill="#fff" />
      <circle cx="12" cy="12" r="4.400" fill="#1a73e8" />
    </>
  );
}

function YBadge({ x, y }) {
  return (
    <>
      <circle cx={x} cy={y} r="8" fill="#5f9b37" />
      <text x={x} y={y + 3} textAnchor="middle" fontSize="10" fill="#fff" className={WIN}>y</text>
    </>
  );
}

function TaskButton({ label, w = "w-[49px]", bar, active, children }) {
  return (
    <button type="button" aria-label={label} className={`${w} ${active ? "bg-[#585858]" : ""} flex h-10 shrink-0 flex-col items-center`}>
      <span className="flex flex-1 items-center justify-center">
        <svg width="28" height="28" viewBox="0 0 28 28" aria-hidden="true">{children}</svg>
      </span>
      <span className={`h-0.5 ${active ? "w-full" : "w-10"} ${bar ? "bg-[#fff2a0]" : ""}`} />
    </button>
  );
}

function Taskbar() {
  return (
    <footer className={`flex h-10 bg-[linear-gradient(90deg,#2d2b2b_0%,#302d2a_55%,#2b2213_63%,#2a2012_70%,#1f2223_80%,#202629_90%,#2b2b2b_100%)] text-white ${WIN}`}>
      <button type="button" aria-label="Start" className="flex w-12 shrink-0 items-center justify-center bg-[#0e0c0f]">
        <Svg w={16} h={16} stroke="none" fill="#fff">
          <path d="M0 2.300L6.500 1.400v6.100H0zM7.300 1.300L16 0v7.500H7.300zM0 8.300h6.500v6.200L0 13.600zM7.300 8.300H16V16l-8.700-1.300z" />
        </Svg>
      </button>
      <label className="flex w-[344px] shrink-0 items-center border-t border-[#bdbdbd] bg-[#f2f2f2] pr-[14px] pl-[9px]">
        <Svg w={22} h={22} stroke="#111"><circle cx="11" cy="11" r="9" strokeWidth="3" /></Svg>
        <input
          type="text"
          placeholder="Type here to search"
          aria-label="Type here to search"
          className="ml-[9px] min-w-0 flex-1 text-[14px] outline-none placeholder:text-[#2b2b2b]"
        />
        <Svg w={14} h={17} stroke="#222">
          <path d="M4.500 1h5v9.500h-5zM1.500 8v2.500a3 3 0 0 0 3 3h5a3 3 0 0 0 3-3V8M7 13.500v2.500M4 16.500h6" strokeWidth="1.2" />
        </Svg>
      </label>
      <TaskButton label="Task view" w="w-12">
        <path d="M6.500 9.500h10v9h-10zM6.500 5.500v2h10v-2M6.500 22.500v-2h10v2M20.500 5.500v4M20.500 15v8" fill="none" stroke="#fff" strokeWidth="1.300" />
        <path d="M19 10.500h3v3h-3z" fill="#fff" />
      </TaskButton>
      <TaskButton label="Chrome" w="ml-0.5 w-[49px]" bar>
        <g transform="translate(2 2)"><Chrome /></g>
        <YBadge x={20} y={20} />
      </TaskButton>
      <TaskButton label="Mail">
        <path d="M2 10L14 1l12 9v2H2z" fill="#0a66b8" />
        <path d="M3 9h22l-11 9z" fill="#e9f2fa" />
        <path d="M2 9l12 9 12-9v17H2z" fill="#1e9ce8" />
        <path d="M26 9v17H8z" fill="#35b6f2" />
      </TaskButton>
      <TaskButton label="Edge">
        <path d="M4 12C5 6 9 3 15 3c6 0 10 4 10 10v3H10c0 4 3 6 7 6 3 0 5-1 7-2v5c-2 1-5 2-8 2-7 0-11-4-11-9 0-4 2-7 6-9-1 1-1.500 2-1.500 4H19c0-3-1-5-5-5-4 0-8 2-10 4z" fill="#0c7bd8" />
      </TaskButton>
      <TaskButton label="File Explorer" bar>
        <path d="M3 4h8l2 3h12v17H3z" fill="#f6cf62" />
        <path d="M3 9h22v15H3z" fill="#fde08a" />
        <path d="M7 25v-8l2-3h11l2 3v8h-4v-5h-7v5z" fill="#35a8e0" />
      </TaskButton>
      <TaskButton label="Store">
        <path d="M3 9h22v17H3z" fill="#fff" />
        <path d="M9 9V3h10v6" fill="none" stroke="#fff" strokeWidth="1.600" />
        <path d="M9 12h4.500v4.500H9z" fill="#f05023" /><path d="M14.500 12H19v4.500h-4.500z" fill="#7fb900" />
        <path d="M9 17.500h4.500V22H9z" fill="#02a3ee" /><path d="M14.500 17.500H19V22h-4.500z" fill="#ffb900" />
      </TaskButton>
      <TaskButton label="WhatsApp" bar>
        <circle cx="14" cy="14" r="12.500" fill="#fff" />
        <path d="M7 20l1-4a7 7 0 1 1 3 3z" fill="none" stroke="#31c153" strokeWidth="1.800" />
        <path d="M11.500 10c-1 2 2 6 5 6l1.500-1.500-2-1-1 .5-2-2 .5-1z" fill="#31c153" />
        <YBadge x={20} y={20} />
      </TaskButton>
      <TaskButton label="Chrome profile" bar>
        <g transform="translate(2 2)"><Chrome /></g>
        <path d="M15 26c-2-5-1-13 4-14 5 0 6 5 6 9l-3 6z" fill="#3a2328" />
        <circle cx="19.500" cy="16.500" r="2.800" fill="#d9a58c" />
        <path d="M18 20c2-1 5 0 6 2a8 8 0 0 1-5 5z" fill="#c9d6e6" />
      </TaskButton>
      <TaskButton label="Tableau" w="w-12" bar active>
        <path d="M3 3h22v22H3z" fill="#fff" />
        <g stroke="#3a7fa5" strokeWidth="1.300">
          <path d="M14 11v6M11 14h6M14 4.500v4M12 6.500h4M14 19.500v4M12 21.500h4M4.500 14h4M6.500 12v4M19.500 14h4M21.500 12v4" />
          <path d="M9.500 7v5M7 9.500h5M18.500 7v5M16 9.500h5M9.500 16v5M7 18.500h5M18.500 16v5M16 18.500h5" />
        </g>
      </TaskButton>
      <div className="ml-auto flex shrink-0 items-center">
        <button type="button" aria-label="People" className="mr-5">
          <Svg w={16} h={16} stroke="#fff" strokeWidth="1.2">
            <circle cx="11" cy="4" r="2.800" /><path d="M8 9c4-3 7-1 7 3" />
            <circle cx="5" cy="9" r="2.500" /><path d="M1 16c0-6 7-6 8 0" />
          </Svg>
        </button>
        <button type="button" aria-label="Show hidden icons" className="mr-3">
          <Svg w={12} h={8} stroke="#fff"><path d="M1 7l5-5 5 5" strokeWidth="1.3" /></Svg>
        </button>
        <button type="button" aria-label="Network" className="mr-2">
          <Svg w={14} h={14} stroke="#fff">
            <path d="M1.500 13.500A12 12 0 0 1 13 1.500M4.500 13.500A9 9 0 0 1 13 5M7.500 13.500A6 6 0 0 1 13 8.500" />
            <circle cx="12" cy="12" r="1.500" fill="#fff" />
          </Svg>
        </button>
        <button type="button" aria-label="Volume" className="mr-2">
          <Svg w={17} h={14} stroke="#fff">
            <path d="M1 5h2.500L7 1.500v11L3.500 9H1zM9.500 5q1.500 2 0 4M11.800 3q3 4 0 8M14 1q4 6 0 12" />
          </Svg>
        </button>
        <button type="button" aria-label="Battery" className="mr-2">
          <Svg w={17} h={14} stroke="#fff">
            <path d="M3 2.500h12v3M8 11.500H3v-9M1 5v4" strokeWidth="1.3" />
            <circle cx="12" cy="9.500" r="4" fill="#19a337" stroke="none" /><path d="M12 7.500v4" />
          </Svg>
        </button>
        <span className="text-[12px]">ENG</span>
        <span className="ml-[10px] flex w-[62px] flex-col items-center text-[11px] leading-[18px] whitespace-nowrap">
          <span>01:41</span>
          <span>11-10-2023</span>
        </span>
        <button type="button" aria-label="6 notifications" className="mr-[14px] ml-[15px]">
          <svg width="28" height="28" viewBox="0 0 28 28" aria-hidden="true">
            <path d="M2 4h16v13h-8l-3 3v-3H2z" fill="#fff" />
            <path d="M5 8h10M5 11h10M5 14h6" stroke="#2b2b2b" />
            <circle cx="18" cy="19" r="8" fill="#2f2f2f" stroke="#aaa" />
            <text x="18" y="23.500" textAnchor="middle" fontSize="12" fontWeight="600" fill="#fff">6</text>
          </svg>
        </button>
      </div>
    </footer>
  );
}

export default function App() {
  return (
    <div className="flex min-h-screen flex-col overflow-hidden bg-[#f4f4f4]">
      <TitleBar />
      <MenuBar />
      <Toolbar />
      <main className="flex flex-1">
        <DataPane />
        <div className="flex min-w-0 flex-1 gap-1.5 pr-1.5 pb-1.5 pl-1.5">
          <Cards />
          <div className={`flex min-w-0 flex-1 flex-col gap-1.5 text-[12px] ${UI}`}>
            <Shelf
              name="Columns"
              pill="Longitude (generated)"
              icon={<Svg w={12} h={12} stroke="none" fill="#666"><path d="M1 0h2v2H1zM5 0h2v2H5zM9 0h2v2H9zM1 3h2v9H1zM5 3h2v9H5zM9 3h2v9H9z" /></Svg>}
            />
            <Shelf
              name="Rows"
              pill="Latitude (generated)"
              icon={<Svg w={12} h={12} stroke="none" fill="#666"><path d="M0 1h2v2H0zM0 5h2v2H0zM0 9h2v2H0zM3 1h9v2H3zM3 5h9v2H3zM3 9h9v2H3z" /></Svg>}
            />
            <div className="flex flex-1 gap-1.5">
              <Viz />
              <Legend />
            </div>
          </div>
        </div>
      </main>
      <SheetTabs />
      <StatusBar />
      <Taskbar />
    </div>
  );
}
